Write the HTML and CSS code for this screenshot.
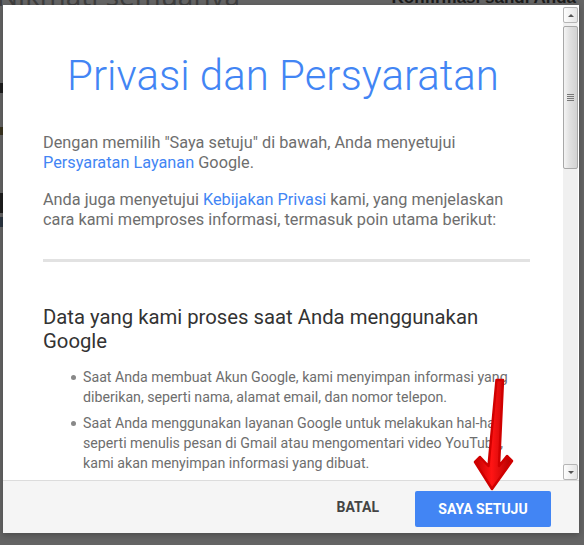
FILE: index.html
```html
<!DOCTYPE html>
<html lang="id">
<head>
    <meta charset="UTF-8">
    <title>Privasi dan Persyaratan</title>
    <link rel="stylesheet" href="styles.css">
</head>
<body>
    <div class="page-bg">
        <div class="bg-strip">
            <span class="strip-dark"></span>
            <span class="strip-gold"></span>
            <span class="strip-dark tall"></span>
            <span class="strip-blue"></span>
        </div>
        <div class="bg-head">
            <span class="bg-title">Nikmati semuanya</span>
            <span class="bg-side">Konfirmasi sandi Anda</span>
        </div>
    </div>

    <div class="dialog">
        <div class="dialog-body">
            <div class="dialog-content">
                <h1 class="dialog-title">Privasi dan Persyaratan</h1>
                <p>Dengan memilih "Saya setuju" di bawah, Anda menyetujui <a href="#">Persyaratan Layanan</a> Google.</p>
                <p>Anda juga menyetujui <a href="#">Kebijakan Privasi</a> kami, yang menjelaskan cara kami memproses informasi, termasuk poin utama berikut:</p>
                <hr class="divider">
                <h2>Data yang kami proses saat Anda menggunakan Google</h2>
                <ul>
                    <li>Saat Anda membuat Akun Google, kami menyimpan informasi yang diberikan, seperti nama, alamat email, dan nomor telepon.</li>
                    <li>Saat Anda menggunakan layanan Google untuk melakukan hal-hal seperti menulis pesan di Gmail atau mengomentari video YouTube, kami akan menyimpan informasi yang dibuat.</li>
                </ul>
            </div>
            <div class="scrollbar">
                <div class="sb-btn"><span class="sb-up"></span></div>
                <div class="sb-thumb"><span class="grip"></span></div>
                <div class="sb-track"></div>
                <div class="sb-btn"><span class="sb-down"></span></div>
            </div>
        </div>
        <div class="dialog-footer">
            <button class="btn-text">BATAL</button>
            <button class="btn-primary">SAYA SETUJU</button>
        </div>
    </div>

    <!-- red pointer arrow drawn over the dialog -->
    <svg class="arrow" width="584" height="545" viewBox="0 0 584 545">
        <defs>
            <linearGradient id="redGrad" x1="0" y1="0" x2="1" y2="0">
                <stop offset="0" stop-color="#c40000"/>
                <stop offset="0.45" stop-color="#ff1414"/>
                <stop offset="1" stop-color="#b00000"/>
            </linearGradient>
        </defs>
        <polygon points="496.5,380 503,380 499,466 507,456 512,461 492,489 475,462 480,457 488.5,466"
                 fill="url(#redGrad)" stroke="#d00000" stroke-width="2.5" stroke-linejoin="round"/>
    </svg>
</body>
</html>
```

FILE: styles.css
```css
body {
    margin: 0;
    background: #646464;
    font-family: Roboto, 'Noto Sans', Arial, sans-serif;
    width: 584px;
    height: 545px;
    overflow: hidden;
    position: relative;
}

/* dimmed page behind the modal */
.page-bg {
    display: flex;
    height: 545px;
}

.bg-strip {
    width: 3px;
    display: flex;
    flex-direction: column;
    padding-top: 83px;
}

.strip-dark {
    height: 10px;
    background: #1e1e1e;
    margin-bottom: 34px;
}

.strip-dark.tall {
    height: 20px;
    margin-bottom: 4px;
}

.strip-gold {
    height: 8px;
    background: #3b3520;
    margin-bottom: 58px;
}

.strip-blue {
    height: 10px;
    background: #2c3642;
}

.bg-head {
    flex: 1;
    display: flex;
    justify-content: space-between;
    align-items: flex-start;
}

.bg-title {
    font-family: 'Open Sans', Arial, sans-serif;
    font-size: 28px;
    line-height: 28px;
    color: #3e3e3e;
    margin-top: -19px;
    margin-left: -6px;
}

.bg-side {
    font-family: Arial, 'Liberation Sans', sans-serif;
    font-size: 17px;
    font-weight: bold;
    line-height: 20px;
    color: #1c1c1c;
    margin-top: -12px;
    margin-right: 8px;
}

/* modal */
.dialog {
    position: absolute;
    left: 3px;
    top: 5px;
    width: 576px;
    height: 528px;
    background: #fff;
    display: flex;
    flex-direction: column;
    box-shadow: 0 2px 6px rgba(0, 0, 0, 0.25);
}

.dialog-body {
    display: flex;
    height: 475px;
}

.dialog-content {
    flex: 1;
    overflow: hidden;
    padding: 46px 33px 0 40px;
    color: #6e6e6e;
}

.dialog-title {
    margin: 0 -33px 32px -40px;
    text-align: center;
    font-size: 42px;
    line-height: 50px;
    font-weight: 300;
    color: #4285f4;
}

.dialog-content p {
    margin: 0 0 17px 0;
    font-size: 16.3px;
    line-height: 20px;
}

.dialog-content a {
    color: #4285f4;
    text-decoration: none;
}

.divider {
    border: none;
    height: 3px;
    background: #e2e2e2;
    margin: 29px 0 43px 0;
}

.dialog-content h2 {
    margin: 0 0 14px 0;
    font-size: 20.3px;
    line-height: 24px;
    font-weight: 400;
    color: #333;
}

.dialog-content ul {
    list-style: none;
    margin: 0;
    padding: 0 0 0 40px;
}

.dialog-content li {
    position: relative;
    font-size: 14.2px;
    line-height: 20px;
    margin-bottom: 6px;
}

.dialog-content li::before {
    content: '';
    position: absolute;
    left: -12px;
    top: 8px;
    width: 5px;
    height: 5px;
    border-radius: 50%;
    background: #888;
}

/* classic scrollbar look */
.scrollbar {
    width: 15px;
    margin: 2px 1px 0 0;
    background: #f0f0f0;
    display: flex;
    flex-direction: column;
}

.sb-btn {
    height: 14px;
    border: 1px solid #b5b5b5;
    border-radius: 2px;
    background: linear-gradient(90deg, #fdfdfd, #e4e4e4);
    display: flex;
    align-items: center;
    justify-content: center;
}

.sb-up {
    border-left: 3px solid transparent;
    border-right: 3px solid transparent;
    border-bottom: 3px solid #555;
}

.sb-down {
    border-left: 3px solid transparent;
    border-right: 3px solid transparent;
    border-top: 3px solid #555;
}

.sb-thumb {
    height: 141px;
    margin-top: 3px;
    border: 1px solid #a8a8a8;
    border-radius: 2px;
    background: linear-gradient(90deg, #f4f4f4, #e0e0e0 45%, #d2d2d2);
    display: flex;
    align-items: center;
    justify-content: center;
}

.grip {
    width: 7px;
    height: 7px;
    background: repeating-linear-gradient(180deg, #777 0 1px, transparent 1px 2px);
}

.sb-track {
    flex: 1;
}

.dialog-footer {
    flex: 1;
    border-top: 1px solid #dcdcdc;
    background: #f5f5f5;
    display: flex;
    align-items: center;
    justify-content: flex-end;
    padding: 0 28px 0 0;
}

.dialog-footer button {
    font-family: Roboto, Arial, sans-serif;
    font-size: 14px;
    font-weight: bold;
    border: none;
    cursor: pointer;
}

.btn-text {
    background: none;
    color: #444;
    padding: 0;
    margin-right: 36px;
}

.btn-primary {
    width: 136px;
    height: 36px;
    margin-top: 3px;
    background: #4285f4;
    color: #fff;
    border-radius: 2px;
}

.arrow {
    position: absolute;
    left: 0;
    top: 0;
    pointer-events: none;
}
```
